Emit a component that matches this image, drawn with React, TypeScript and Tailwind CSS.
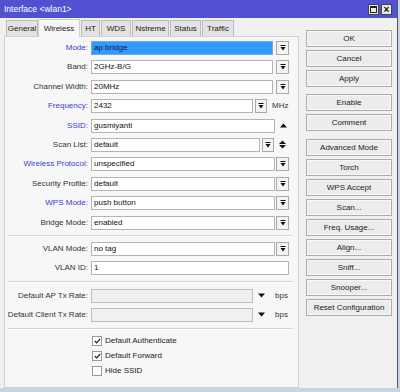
import React from 'react';

const font = { fontFamily: '"Liberation Sans", Arial, sans-serif' };

function DropIcon() {
  return (
    <svg width="6" height="6" viewBox="0 0 6 6">
      <rect x="0.5" y="0" width="5" height="1" fill="#111" />
      <polygon points="0.5,2 5.5,2 3,5.5" fill="#111" />
    </svg>
  );
}

function DropBtn({ w = 'w-[13px]' }: { w?: string }) {
  return (
    <div className={`${w} h-[14px] flex items-center justify-center border border-[#a9a9a9] bg-[#f4f4f4]`}>
      <DropIcon />
    </div>
  );
}

function Field({ value, w, selected, disabled }: { value?: string; w: string; selected?: boolean; disabled?: boolean }) {
  return (
    <div
      className={`${w} h-[14px] flex items-center pl-[2px] border ${
        selected ? 'bg-[#3399ff] border-[#7aa7d9] text-[#10203a]' : disabled ? 'bg-[#f0f0f0] border-[#bdbdbd]' : 'bg-white border-[#b4b4b4] text-[#111]'
      }`}
    >
      {value}
    </div>
  );
}

function Row({ label, blue, children }: { label: string; blue?: boolean; children: React.ReactNode }) {
  return (
    <div className="flex items-center h-[14px]">
      <div className={`w-[86px] text-right pr-[3px] ${blue ? 'text-[#3b3bd6]' : 'text-[#333]'}`}>{label}:</div>
      <div className="flex items-center">{children}</div>
    </div>
  );
}

function Check({ label, on }: { label: string; on?: boolean }) {
  return (
    <div className="flex items-center h-[15px] pl-[87px]">
      <div className="w-[10px] h-[10px] border border-[#9a9a9a] bg-white flex items-center justify-center">
        {on && (
          <svg width="7" height="6" viewBox="0 0 7 6">
            <path d="M0.8 3 L2.6 4.8 L6.2 1" stroke="#222" strokeWidth="1.2" fill="none" />
          </svg>
        )}
      </div>
      <span className="ml-[3px] text-[#222]">{label}</span>
    </div>
  );
}

function Sep() {
  return <div className="ml-[3px] mr-[5px] border-t border-[#d5d5d5] border-b border-b-white" />;
}

function Btn({ label, mt = '' }: { label: string; mt?: string }) {
  return (
    <div className={`${mt} h-[17px] w-[86px] flex items-center justify-center border border-[#acacac] bg-[#ececec] text-[#222] shadow-[inset_0_0_0_1px_#f8f8f8]`}>
      {label}
    </div>
  );
}

const tabs = [
  { name: 'General', w: 'w-[32px]' },
  { name: 'Wireless', w: 'w-[42px]', active: true },
  { name: 'HT', w: 'w-[19px]' },
  { name: 'WDS', w: 'w-[30px]' },
  { name: 'Nstreme', w: 'w-[37px]' },
  { name: 'Status', w: 'w-[31px]' },
  { name: 'Traffic', w: 'w-[32px]' },
];

export default function App() {
  return (
    <div className="w-[400px] h-[392px] bg-[#c6d4e4] overflow-hidden text-[8px]" style={font}>
      <div className="w-[398px] h-[388px] bg-[#f0f0f0] border-r border-[#5a5a5a] flex flex-col">
        {/* title bar */}
        <div className="h-[18px] bg-[#5151d1] flex items-center justify-between pl-[4px] pr-[5px]">
          <span className="text-white text-[8.5px]">Interface &lt;wlan1&gt;</span>
          <div className="flex gap-[2px] mt-[1px]">
            <div className="w-[11px] h-[11px] bg-[#e8e8e8] border border-[#444] flex items-center justify-center">
              <div className="w-[7px] h-[7px] border border-[#222] border-t-2" />
            </div>
            <div className="w-[11px] h-[11px] bg-[#e8e8e8] border border-[#444] flex items-center justify-center text-[10px] leading-none text-[#111] font-bold">
              ×
            </div>
          </div>
        </div>

        <div className="flex flex-1">
          {/* left: tabs + panel */}
          <div className="w-[299px] flex flex-col pl-[4px]">
            <div className="flex items-end h-[18px] pl-[1px]">
              {tabs.map((t) =>
                t.active ? (
                  <div key={t.name} className={`${t.w} h-[18px] flex items-center justify-center bg-[#f7f7f7] border border-b-0 border-[#cfcfcf] text-[#222] -mb-[1px] relative z-10`}>
                    {t.name}
                  </div>
                ) : (
                  <div key={t.name} className={`${t.w} h-[16px] flex items-center justify-center bg-[#e3e3e3] border border-b-0 border-[#bcbcbc] text-[#222] ml-[1px]`}>
                    {t.name}
                  </div>
                )
              )}
            </div>
            <div className="flex-1 border border-[#d0d0d0] bg-[#f7f7f7] pt-[4px]">
              <div className="flex flex-col gap-[5.4px]">
                <Row label="Mode" blue>
                  <Field value="ap bridge" w="w-[182px]" selected />
                  <div className="ml-[3px]"><DropBtn /></div>
                </Row>
                <Row label="Band">
                  <Field value="2GHz-B/G" w="w-[182px]" />
                  <div className="ml-[3px]"><DropBtn /></div>
                </Row>
                <Row label="Channel Width">
                  <Field value="20MHz" w="w-[182px]" />
                  <div className="ml-[3px]"><DropBtn /></div>
                </Row>
                <Row label="Frequency" blue>
                  <Field value="2432" w="w-[162px]" />
                  <div className="ml-[2px]"><DropBtn w="w-[12px]" /></div>
                  <span className="ml-[5px] text-[#333]">MHz</span>
                </Row>
                <Row label="SSID" blue>
                  <Field value="gusmiyanti" w="w-[184px]" />
                  <svg className="ml-[5px]" width="7" height="5" viewBox="0 0 7 5">
                    <polygon points="0,4.5 7,4.5 3.5,0.5" fill="#111" />
                  </svg>
                </Row>
                <Row label="Scan List">
                  <Field value="default" w="w-[169px]" />
                  <div className="ml-[2px]"><DropBtn w="w-[12px]" /></div>
                  <svg className="ml-[5px]" width="7" height="9" viewBox="0 0 7 9">
                    <polygon points="0,4 7,4 3.5,0.5" fill="#111" />
                    <polygon points="0,5 7,5 3.5,8.5" fill="#111" />
                  </svg>
                </Row>
                <Row label="Wireless Protocol" blue>
                  <Field value="unspecified" w="w-[184px]" />
                  <div className="ml-[1px]"><DropBtn /></div>
                </Row>
                <Row label="Security Profile">
                  <Field value="default" w="w-[184px]" />
                  <div className="ml-[1px]"><DropBtn /></div>
                </Row>
                <Row label="WPS Mode" blue>
                  <Field value="push button" w="w-[184px]" />
                  <div className="ml-[1px]"><DropBtn /></div>
                </Row>
                <Row label="Bridge Mode">
                  <Field value="enabled" w="w-[184px]" />
                  <div className="ml-[1px]"><DropBtn /></div>
                </Row>
              </div>

              <div className="mt-[5px]"><Sep /></div>

              <div className="mt-[5px] flex flex-col gap-[5px]">
                <Row label="VLAN Mode">
                  <Field value="no tag" w="w-[184px]" />
                  <div className="ml-[1px]"><DropBtn /></div>
                </Row>
                <Row label="VLAN ID">
                  <Field value="1" w="w-[198px]" />
                </Row>
              </div>

              <div className="mt-[6px]"><Sep /></div>

              <div className="mt-[6px] flex flex-col gap-[5px]">
                <Row label="Default AP Tx Rate">
                  <Field w="w-[162px]" disabled />
                  <svg className="ml-[5px]" width="7" height="5" viewBox="0 0 7 5">
                    <polygon points="0,0.5 7,0.5 3.5,4.5" fill="#111" />
                  </svg>
                  <span className="ml-[10px] text-[#333]">bps</span>
                </Row>
                <Row label="Default Client Tx Rate">
                  <Field w="w-[162px]" disabled />
                  <svg className="ml-[5px]" width="7" height="5" viewBox="0 0 7 5">
                    <polygon points="0,0.5 7,0.5 3.5,4.5" fill="#111" />
                  </svg>
                  <span className="ml-[10px] text-[#333]">bps</span>
                </Row>
              </div>

              <div className="mt-[6px]"><Sep /></div>

              <div className="mt-[4px] flex flex-col">
                <Check label="Default Authenticate" on />
                <Check label="Default Forward" on />
                <Check label="Hide SSID" />
              </div>
            </div>
          </div>

          {/* right: buttons */}
          <div className="flex flex-col gap-[3px] pl-[7px] pt-[12px]">
            <Btn label="OK" />
            <Btn label="Cancel" />
            <Btn label="Apply" />
            <Btn label="Enable" mt="mt-[4px]" />
            <Btn label="Comment" />
            <Btn label="Advanced Mode" mt="mt-[5px]" />
            <Btn label="Torch" />
            <Btn label="WPS Accept" />
            <Btn label="Scan..." />
            <Btn label="Freq. Usage..." />
            <Btn label="Align..." />
            <Btn label="Sniff..." />
            <Btn label="Snooper..." />
            <Btn label="Reset Configuration" />
          </div>
        </div>
      </div>
    </div>
  );
}
